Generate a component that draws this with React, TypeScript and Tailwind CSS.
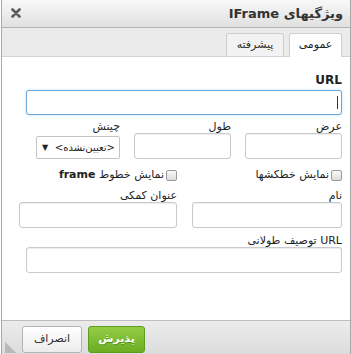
import React from 'react'

const font = { fontFamily: '"DejaVu Sans", "Noto Sans", sans-serif' }

function Field({ label, width, focused }: { label: string; width: string; focused?: boolean }) {
  return (
    <div className={`flex flex-col ${width}`}>
      <div className="h-[12px] text-[11px] leading-[12px] text-[#222]">{label}</div>
      <input
        className={
          focused
            ? 'h-[26px] w-full rounded-[3px] border border-[#6aa6d8] bg-white shadow-[0_0_3px_#bfe0f5] outline-none'
            : 'h-[26px] w-full rounded-[3px] border border-[#c9c9c9] bg-white shadow-[inset_0_1px_1px_#eee] outline-none'
        }
      />
    </div>
  )
}

function Check({ label }: { label: React.ReactNode }) {
  return (
    <div className="flex items-center gap-[2px] text-[11px] leading-[14px] text-[#222]">
      <span className="h-[11px] w-[11px] rounded-[2px] border border-[#9a9a9a] bg-gradient-to-b from-[#fafafa] to-[#dcdcdc]" />
      <span>{label}</span>
    </div>
  )
}

export default function App() {
  return (
    <div className="h-[354px] w-[351px] overflow-hidden bg-white pl-px" style={font}>
      <div dir="rtl" className="relative flex h-[354px] w-[350px] flex-col border-x border-[#a9a9a9]">
        {/* Title bar */}
        <div className="flex h-[28px] items-center justify-between border-b border-[#b4b4b4] bg-gradient-to-b from-[#f8f8f8] to-[#e0e0e0] pl-[9px] pr-[7px]">
          <span className="text-[13px] font-bold text-[#333]">ویژگیهای IFrame</span>
          <svg width="10" height="10" viewBox="0 0 10 10" className="mb-[1px]">
            <path d="M1.5 1.5 L8.5 8.5 M8.5 1.5 L1.5 8.5" stroke="#5a5a5a" strokeWidth="2.6" strokeLinecap="round" />
          </svg>
        </div>

        {/* Tabs */}
        <div className="flex h-[29px] items-end gap-[5px] border-b border-[#d2d2d2] bg-[#ebebeb] pr-[8px]">
          <div className="-mb-px flex h-[24px] w-[53px] items-center justify-center rounded-t-[3px] border border-b-0 border-[#cfcfcf] bg-white text-[11px] text-[#222]">
            عمومی
          </div>
          <div className="mb-0 flex h-[23px] w-[58px] items-center justify-center rounded-t-[3px] border border-b-0 border-[#cfcfcf] bg-[#f2f2f2] text-[11px] text-[#333]">
            پیشرفته
          </div>
        </div>

        {/* Body */}
        <div className="flex flex-1 flex-col pr-[8px] pt-[16px]">
          <div className="h-[14px] text-[12px] font-bold leading-[14px] text-[#222]">URL</div>
          <div className="mt-[3px] flex h-[25px] w-[316px] items-center justify-start rounded-[3px] border border-[#6aa6d8] bg-white pr-[3px] shadow-[0_0_3px_#bfe0f5]">
            <span className="h-[13px] w-px bg-[#333]" />
          </div>

          <div className="mt-[6px] flex gap-[14px]">
            <Field label="عرض" width="w-[97px]" />
            <Field label="طول" width="w-[97px]" />
            <div className="flex w-[84px] flex-col">
              <div className="h-[12px] text-[11px] leading-[12px] text-[#222]">چینش</div>
              <div className="mt-[3px] flex h-[23px] items-center justify-between rounded-[2px] border border-[#c4c4c4] bg-white pl-[5px] pr-[4px] text-[10px] text-[#222]">
                <span>&lt;تعیین‌نشده&gt;</span>
                <span className="text-[8px]">▼</span>
              </div>
            </div>
          </div>

          <div className="mt-[9px] flex gap-[14px]">
            <div className="w-[151px]">
              <Check label="نمایش خطکشها" />
            </div>
            <Check label={<>نمایش خطوط <b>frame</b></>} />
          </div>

          <div className="mt-[8px] flex gap-[15px]">
            <Field label="نام" width="w-[150px]" />
            <Field label="عنوان کمکی" width="w-[158px]" />
          </div>

          <div className="mt-[7px]">
            <Field label="URL توصیف طولانی" width="w-[316px]" />
          </div>
        </div>

        {/* Footer */}
        <div className="relative flex h-[34px] items-start justify-end gap-[6px] border-t border-[#bdbdbd] bg-gradient-to-b from-[#ececec] to-[#dcdcdc] pl-[20px] pt-[5px]">
          <button className="flex h-[27px] w-[57px] items-center justify-center rounded-[3px] border border-[#5d9c1e] bg-gradient-to-b from-[#94cd45] to-[#6aad22] text-[11px] font-bold text-white [text-shadow:0_1px_0_#4f8a15]">
            پذیرش
          </button>
          <button className="flex h-[27px] w-[60px] items-center justify-center rounded-[3px] border border-[#b4b4b4] bg-gradient-to-b from-white to-[#ececec] text-[11px] text-[#333]">
            انصراف
          </button>
          <svg width="11" height="11" viewBox="0 0 11 11" className="absolute bottom-[1px] left-[3px]">
            <path d="M0 11 L0 0 L11 11 Z" fill="#b8b8b8" />
          </svg>
        </div>
      </div>
    </div>
  )
}
